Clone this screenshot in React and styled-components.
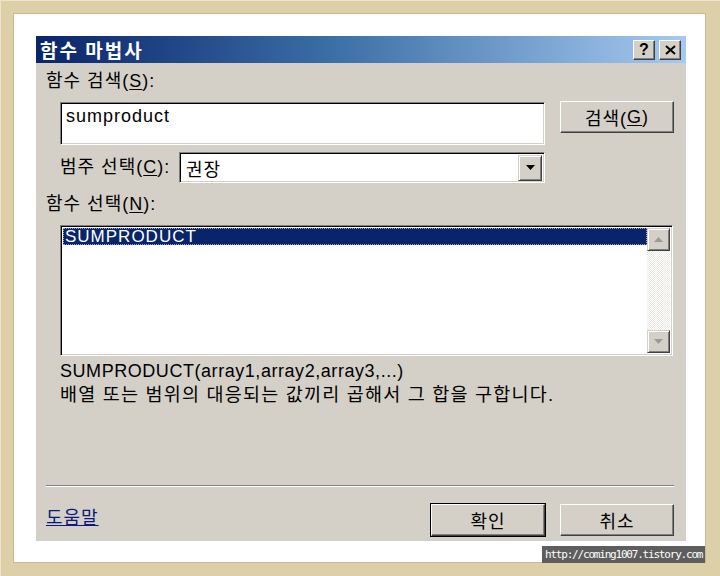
import React from 'react';
import styled, { createGlobalStyle } from 'styled-components';

const GlobalStyle = createGlobalStyle`
  html, body {
    margin: 0;
    padding: 0;
    background: #ffffff;
  }
  body {
    font-family: "Liberation Sans", "Noto Sans CJK KR", sans-serif;
  }
`

const Frame = styled.div`
  position: relative;
  width: 720px;
  height: 576px;
  box-sizing: border-box;
  background: #ddd0a9;
  padding: 12px 14px 13px 12px;
  border-top: 1px solid #eee5cc;
  border-left: 1px solid #eee5cc;
`

const Inner = styled.div`
  height: 100%;
  box-sizing: border-box;
  background: #ffffff;
  border: 1px solid #c9bb92;
  padding: 22px 19px 20px 22px;
`

const Dialog = styled.div`
  width: 650px;
  height: 505px;
  background: #d4d0c8;
  display: flex;
  flex-direction: column;
`

const TitleBar = styled.div`
  height: 27px;
  flex-shrink: 0;
  background: linear-gradient(to right, #0a246a 0%, #3a6ea5 45%, #a6caf0 100%);
  display: flex;
  align-items: center;
  justify-content: space-between;
  padding: 0 5px 0 4px;
  font-family: "Noto Sans CJK KR", sans-serif;
  font-weight: 700;
  font-size: 19px;
  color: #ffffff;
  letter-spacing: 2px;
`

const TitleButtons = styled.div`
  display: flex;
  gap: 4px;
`

const CaptionButton = styled.div`
  width: 22px;
  height: 20px;
  box-sizing: border-box;
  background: #d4d0c8;
  border-top: 1px solid #ffffff;
  border-left: 1px solid #ffffff;
  border-right: 1px solid #404040;
  border-bottom: 1px solid #404040;
  box-shadow: inset -1px -1px 0 #808080;
  display: flex;
  align-items: center;
  justify-content: center;
  color: #000;
  font-family: "Liberation Sans", sans-serif;
  font-weight: 700;
  font-size: 16px;
  letter-spacing: 0;
`

const Body = styled.div`
  flex: 1;
  display: flex;
  flex-direction: column;
  padding: 7px 12px 5px 10px;
  font-size: 18px;
  letter-spacing: 1px;
  color: #000;
`

const Label = styled.div`
  height: 22px;
  line-height: 22px;
  white-space: nowrap;
  margin-top: ${p => p.$top || 0}px;
  u { text-decoration: underline; text-underline-offset: 2px; }
`

const RowLabel = styled(Label)`
  width: 119px;
  height: 31px;
  line-height: 31px;
  flex-shrink: 0;
`

const Row = styled.div`
  display: flex;
  align-items: flex-start;
  margin-left: 14px;
  margin-top: ${p => p.$top || 0}px;
`

const Sunken = styled.div`
  box-sizing: border-box;
  background: #ffffff;
  border-top: 1px solid #808080;
  border-left: 1px solid #808080;
  border-right: 1px solid #ffffff;
  border-bottom: 1px solid #ffffff;
  box-shadow: inset 1px 1px 0 #000, inset -1px -1px 0 #d4d0c8;
`

const SearchInput = styled(Sunken)`
  width: 485px;
  height: 43px;
  padding: 2px 5px;
  line-height: 22px;
`

const Button = styled.div`
  width: ${p => p.$w || 114}px;
  height: 32px;
  box-sizing: border-box;
  background: #d4d0c8;
  border-top: 1px solid #ffffff;
  border-left: 1px solid #ffffff;
  border-right: 1px solid #404040;
  border-bottom: 1px solid #404040;
  box-shadow: inset -1px -1px 0 #808080;
  outline: ${p => (p.$default ? '1px solid #000' : 'none')};
  display: flex;
  align-items: center;
  justify-content: center;
  margin-left: ${p => p.$left || 0}px;
  margin-top: ${p => p.$mt || 0}px;
  u { text-decoration: underline; text-underline-offset: 2px; }
`

const Select = styled(Sunken)`
  width: 366px;
  height: 31px;
  display: flex;
  align-items: center;
  justify-content: space-between;
  padding: 2px;
  span { padding-left: 4px; }
`

const ArrowButton = styled.div`
  width: 24px;
  height: 26px;
  box-sizing: border-box;
  background: #d4d0c8;
  border-top: 1px solid #d4d0c8;
  border-left: 1px solid #d4d0c8;
  border-right: 1px solid #404040;
  border-bottom: 1px solid #404040;
  box-shadow: inset 1px 1px 0 #ffffff, inset -1px -1px 0 #808080;
  display: flex;
  align-items: center;
  justify-content: center;
`

const List = styled(Sunken)`
  width: 613px;
  height: 131px;
  margin-left: 14px;
  margin-top: 10px;
  padding: 2px;
  display: flex;
`

const ListItems = styled.div`
  flex: 1;
`

const Selected = styled.div`
  height: 17px;
  background: #0a246a;
  color: #fff;
  outline: 1px dotted #a0a0c0;
  outline-offset: -1px;
  font-size: 17px;
  line-height: 17px;
  padding-left: 2px;
`

const ScrollBar = styled.div`
  width: 23px;
  display: flex;
  flex-direction: column;
  justify-content: space-between;
  background: repeating-conic-gradient(#ffffff 0 25%, #ebe9e4 0 50%) 0 0 / 2px 2px;
`

const ScrollButton = styled(ArrowButton)`
  width: 23px;
  height: 23px;
`

const Desc = styled.div`
  margin-left: 14px;
  margin-top: 3px;
  line-height: 24px;
  white-space: nowrap;
`

const SyntaxLine = styled.div`
  letter-spacing: 0.55px;
`

const KoreanLine = styled.div`
  font-size: 18.5px;
  letter-spacing: 1.2px;
`

const Separator = styled.div`
  margin-top: auto;
  height: 0;
  border-top: 1px solid #808080;
  border-bottom: 1px solid #ffffff;
`

const Footer = styled.div`
  display: flex;
  align-items: center;
  margin-top: 17px;
  height: 32px;
`

const HelpLink = styled.a`
  color: #0a1a7a;
  text-decoration: underline;
  margin-top: -8px;
  cursor: pointer;
`

const Spacer = styled.div`
  flex: 1;
`

const Watermark = styled.div`
  position: absolute;
  left: 541px;
  top: 545px;
  width: 163px;
  height: 17px;
  background: #5e5e5e;
  color: #ffffff;
  font-family: "DejaVu Sans Mono", monospace;
  font-size: 11px;
  letter-spacing: -1.2px;
  line-height: 17px;
  padding-left: 3px;
  box-sizing: border-box;
  white-space: nowrap;
  overflow: hidden;
`

const Tri = ({ up, color }) => (
  <svg width="9" height="5" viewBox="0 0 9 5">
    {up
      ? <polygon points="0,5 9,5 4.5,0" fill={color} />
      : <polygon points="0,0 9,0 4.5,5" fill={color} />}
  </svg>
)

const App = () => {
  return (
    <>
      <GlobalStyle />
      <Frame>
        <Inner>
          <Dialog>
            <TitleBar>
              <span>함수 마법사</span>
              <TitleButtons>
                <CaptionButton>?</CaptionButton>
                <CaptionButton>
                  <svg width="11" height="10" viewBox="0 0 11 10">
                    <path d="M1 1 L10 9 M10 1 L1 9" stroke="#000" strokeWidth="2" />
                  </svg>
                </CaptionButton>
              </TitleButtons>
            </TitleBar>
            <Body>
              <Label>함수 검색(<u>S</u>):</Label>
              <Row $top={10}>
                <SearchInput>sumproduct</SearchInput>
                <Button $left={15} $mt={-1}>검색(<u>G</u>)</Button>
              </Row>
              <Row $top={7}>
                <RowLabel>범주 선택(<u>C</u>):</RowLabel>
                <Select>
                  <span>권장</span>
                  <ArrowButton><Tri color="#000" /></ArrowButton>
                </Select>
              </Row>
              <Label $top={10}>함수 선택(<u>N</u>):</Label>
              <List>
                <ListItems>
                  <Selected>SUMPRODUCT</Selected>
                </ListItems>
                <ScrollBar>
                  <ScrollButton><Tri up color="#9a9a9a" /></ScrollButton>
                  <ScrollButton><Tri color="#9a9a9a" /></ScrollButton>
                </ScrollBar>
              </List>
              <Desc>
                <SyntaxLine>SUMPRODUCT(array1,array2,array3,...)</SyntaxLine>
                <KoreanLine>배열 또는 범위의 대응되는 값끼리 곱해서 그 합을 구합니다.</KoreanLine>
              </Desc>
              <Separator />
              <Footer>
                <HelpLink>도움말</HelpLink>
                <Spacer />
                <Button $default>확인</Button>
                <Button $left={15}>취소</Button>
              </Footer>
            </Body>
          </Dialog>
        </Inner>
        <Watermark>http://coming1007.tistory.com</Watermark>
      </Frame>
    </>
  )
}

export default App
